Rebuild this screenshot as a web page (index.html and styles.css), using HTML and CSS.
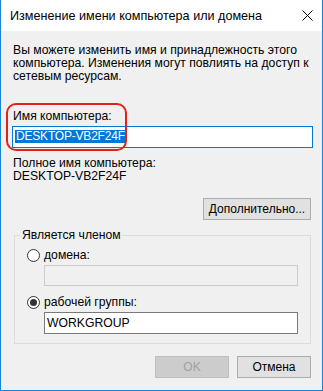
FILE: index.html
```html
<!DOCTYPE html>
<html lang="ru">
<head>
<meta charset="utf-8">
<title>Изменение имени компьютера или домена</title>
<link rel="stylesheet" href="styles.css">
</head>
<body>
<div class="window">
  <div class="titlebar">
    <span class="title">Изменение имени компьютера или домена</span>
    <svg class="close" width="11" height="11" viewBox="0 0 11 11"><path d="M0.5 0.5 L10.5 10.5 M10.5 0.5 L0.5 10.5" stroke="#000" stroke-width="1" fill="none"/></svg>
  </div>
  <div class="content">
    <p class="intro">Вы можете изменить имя и принадлежность этого компьютера. Изменения могут повлиять на доступ к сетевым ресурсам.</p>
    <div class="name-block">
      <div class="label">Имя компьютера:</div>
      <div class="textbox focused"><span class="selected">DESKTOP-VB2F24F</span></div>
      <div class="annotation"></div>
    </div>
    <div class="label full-label">Полное имя компьютера:</div>
    <div class="label">DESKTOP-VB2F24F</div>
    <div class="btn-row more-row">
      <button class="btn more">Дополнительно...</button>
    </div>
    <fieldset class="group">
      <legend>Является членом</legend>
      <div class="group-inner">
        <div class="radio-row">
          <span class="radio"></span><span class="radio-label">домена:</span>
        </div>
        <div class="textbox disabled small first-box"></div>
        <div class="radio-row second">
          <span class="radio checked"></span><span class="radio-label">рабочей группы:</span>
        </div>
        <div class="textbox small normal second-box">WORKGROUP</div>
      </div>
    </fieldset>
    <div class="btn-row footer">
      <button class="btn ok" disabled>OK</button>
      <button class="btn cancel">Отмена</button>
    </div>
  </div>
</div>
</body>
</html>
```

FILE: styles.css
```css
* { box-sizing: border-box; }
html, body { margin: 0; padding: 0; }
body {
  font-family: "Liberation Sans", Arial, sans-serif;
  font-size: 12.2px;
  color: #000;
}
.window {
  width: 323px;
  height: 391px;
  background: #f0f0f0;
  border: 1px solid #1883d7;
  border-top: none;
  display: flex;
  flex-direction: column;
}
.titlebar {
  height: 31px;
  background: #fff;
  display: flex;
  align-items: center;
  justify-content: space-between;
  padding: 0 9px 0 9px;
  flex: none;
}
.title {
  font-size: 12.6px;
  color: #000;
  line-height: 16px;
}
.close { display: block; }
.content {
  padding: 13px 10px 0 11px;
  display: flex;
  flex-direction: column;
}
.intro {
  margin: 0;
  line-height: 13px;
  padding-left: 1px;
}
.label {
  line-height: 13px;
  padding-left: 1px;
}
.name-block {
  position: relative;
  margin-top: 27px;
}
.textbox {
  height: 22px;
  background: #fff;
  border: 1px solid #7a7a7a;
  line-height: 20px;
  padding-left: 2px;
}
.focused {
  margin-top: 3px;
  border-color: #0078d7;
  width: 301px;
}
.selected {
  background: #0078d7;
  color: #fff;
  display: inline-block;
  font-size: 12px;
  letter-spacing: -0.2px;
  line-height: 13px;
  padding: 0 1px 0 1px;
  vertical-align: 1px;
}
.annotation {
  position: absolute;
  left: -6px;
  top: -7px;
  width: 121px;
  height: 48px;
  border: 2.5px solid #e3211b;
  border-radius: 10px;
  pointer-events: none;
}
.full-label { margin-top: 9px; }
.btn-row {
  display: flex;
  justify-content: flex-end;
  gap: 8px;
}
.more-row { margin-top: 15px; padding-right: 1px; }
.btn {
  font-family: inherit;
  font-size: 12px;
  color: #000;
  background: #e1e1e1;
  border: 1px solid #adadad;
  height: 22px;
  padding: 0;
  margin: 0;
}
.more { width: 108px; }
.group {
  margin: 9px 1px 0 2px;
  padding: 0;
  border: 1px solid #dcdcdc;
  min-width: 0;
}
.group legend {
  margin-left: 6px;
  padding: 0 1px;
  line-height: 13px;
}
.group-inner {
  padding: 7px 13px 9px 12px;
  display: flex;
  flex-direction: column;
}
.radio-row {
  display: flex;
  align-items: center;
  height: 13px;
}
.radio-row.second { margin-top: 10px; }
.radio {
  width: 13px;
  height: 13px;
  border-radius: 50%;
  border: 1px solid #333;
  background: #fff;
  display: flex;
  align-items: center;
  justify-content: center;
  flex: none;
}
.radio.checked::after {
  content: "";
  width: 7px;
  height: 7px;
  border-radius: 50%;
  background: #333;
}
.radio-label {
  margin-left: 4px;
  line-height: 13px;
}
.textbox.small {
  margin-top: 3px;
  margin-left: 17px;
  width: 254px;
}
.first-box { height: 21px; }
.disabled {
  background: #f0f0f0;
  border-color: #cccccc;
}
.footer { margin-top: 12px; padding-right: 1px; }
.ok, .cancel { width: 74px; }
.ok {
  background: #cccccc;
  border-color: #bfbfbf;
  color: #a0a0a0;
}
```
